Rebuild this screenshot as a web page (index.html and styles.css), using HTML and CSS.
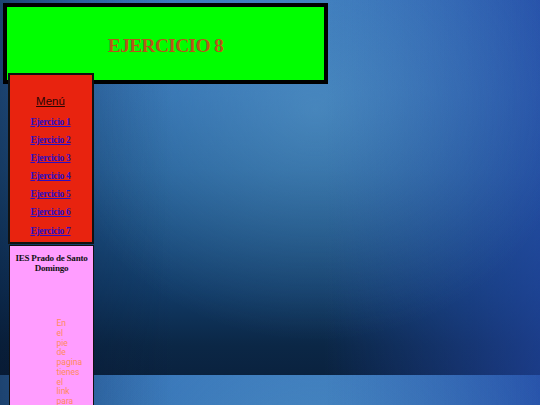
FILE: index.html
```html
<!DOCTYPE html>
<html lang="es">
<head>
<meta charset="utf-8">
<title>Ejercicio 8</title>
<link rel="stylesheet" href="styles.css">
</head>
<body>
<div class="page">
  <header class="cabecera">
    <h1 class="titulo">EJERCICIO 8</h1>
  </header>
  <nav class="menu">
    <p class="menu-titulo">Menú</p>
    <a class="enlace" href="#">Ejercicio 1</a>
    <a class="enlace" href="#">Ejercicio 2</a>
    <a class="enlace" href="#">Ejercicio 3</a>
    <a class="enlace" href="#">Ejercicio 4</a>
    <a class="enlace" href="#">Ejercicio 5</a>
    <a class="enlace" href="#">Ejercicio 6</a>
    <a class="enlace" href="#">Ejercicio 7</a>
  </nav>
  <aside class="lateral">
    <h2 class="centro">IES Prado de Santo Domingo</h2>
    <p class="nota">En el pie de pagina tienes el link para</p>
  </aside>
</div>
</body>
</html>
```

FILE: styles.css
```css
html, body {
  margin: 0;
  padding: 0;
  height: 100%;
}

body {
  background-color: #0b2443;
  background-image:
    radial-gradient(ellipse 260px 230px at 315px 110px, rgba(110, 175, 215, 0.4), rgba(110, 175, 215, 0) 100%),
    linear-gradient(to right, rgba(6, 20, 44, 0.5) 0%, rgba(6, 20, 44, 0.2) 15%, rgba(6, 20, 44, 0) 32%),
    linear-gradient(to right, rgba(40, 70, 170, 0) 60%, rgba(34, 70, 165, 0.7) 100%),
    linear-gradient(to bottom, #3573b8 0%, #2f6dae 25%, #25609a 45%, #1a4d80 62%, #113a66 78%, #0b2746 92%, #0a223f 100%);
  background-size: 100% 375px;
  background-repeat: repeat-y;
  font-family: "Liberation Serif", "Times New Roman", serif;
  overflow: hidden;
}

.page {
  padding: 3px;
}

.cabecera {
  box-sizing: border-box;
  width: 325px;
  height: 81px;
  border: 4px solid #000;
  background: #00ff00;
  display: flex;
  align-items: center;
  justify-content: center;
}

.titulo {
  margin: 5px 0 0 0;
  font-size: 19.5px;
  letter-spacing: -0.7px;
  font-weight: bold;
  color: #b5561a;
}

.menu {
  box-sizing: border-box;
  width: 86px;
  height: 171px;
  margin: -11px 0 0 4.5px;
  border: 2px solid #111;
  background: #e8230f;
  display: flex;
  flex-direction: column;
  align-items: center;
  padding-top: 19px;
}

.menu-titulo {
  margin: 0 0 5px 0;
  font-family: "Liberation Sans", Arial, sans-serif;
  font-size: 11.5px;
  line-height: 14px;
  color: #2a0505;
  text-decoration: underline;
}

.enlace {
  display: block;
  font-size: 9.5px;
  letter-spacing: -0.3px;
  line-height: 18.1px;
  font-weight: bold;
  color: #2a0fc4;
  text-decoration: underline;
}

.lateral {
  box-sizing: border-box;
  width: 85px;
  height: 200px;
  margin: 1px 0 0 6px;
  border: 1.5px solid #111;
  border-bottom: none;
  background: #ff9dff;
  padding-top: 8px;
}

.centro {
  margin: 0;
  font-size: 9px;
  letter-spacing: -0.2px;
  line-height: 9.8px;
  font-weight: bold;
  text-align: center;
  color: #111;
}

.nota {
  margin: 45.5px 0 0 46.5px;
  width: 12px;
  font-family: Roboto, "Liberation Sans", Arial, sans-serif;
  font-size: 8.5px;
  line-height: 9.75px;
  color: #ff8a5c;
}
```
